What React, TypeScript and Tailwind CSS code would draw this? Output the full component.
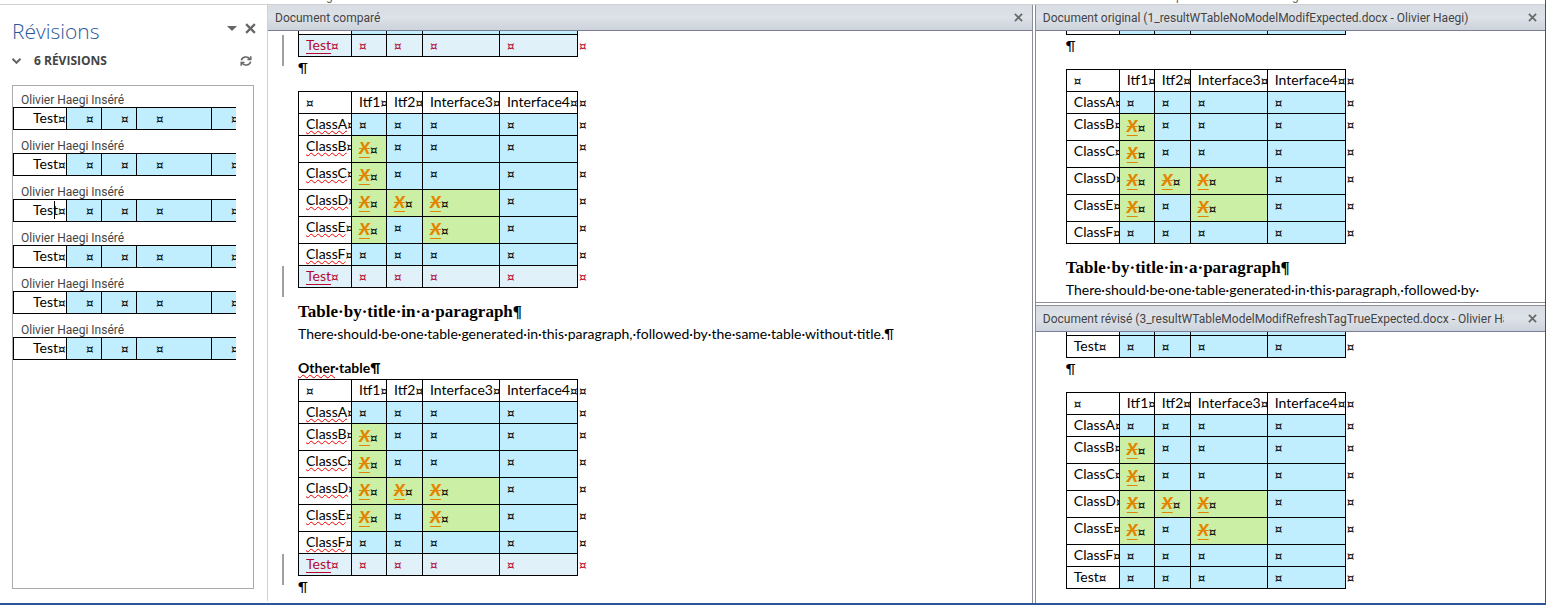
import { Fragment } from "react";

const HEADINGS = ["", "Itf1", "Itf2", "Interface3", "Interface4"];
const CLASS_ROWS = [
  { name: "ClassA", cells: ["", "", "", ""] },
  { name: "ClassB", cells: ["X", "", "", ""] },
  { name: "ClassC", cells: ["X", "", "", ""] },
  { name: "ClassD", cells: ["X", "X", "X", ""] },
  { name: "ClassE", cells: ["X", "", "X", ""] },
  { name: "ClassF", cells: ["", "", "", ""] },
];
const PARAGRAPH =
  "There should be one table generated in this paragraph, followed by the same table without title.¶";
const PARAGRAPH_FIRST_LINE = "There should be one table generated in this paragraph, followed by ";

type TestRow = "none" | "plain" | "inserted";

function Mark() {
  return <span className="font-['DejaVu_Sans',sans-serif] text-[12px] leading-none">¤</span>;
}

function Columns() {
  return (
    <colgroup>
      <col className="w-[54px]" />
      <col className="w-[35px]" />
      <col className="w-[36px]" />
      <col className="w-[77px]" />
      <col className="w-[78px]" />
      <col className="w-3" />
    </colgroup>
  );
}

const cellBase = "overflow-hidden border-r border-b border-black p-0 align-top font-normal text-left";
const tableBase = "w-[292px] table-fixed border-separate border-spacing-0 whitespace-nowrap text-[14px] leading-[19px]";

function RowEnd({ red = false }: { red?: boolean }) {
  return (
    <td className={red ? "p-0 pl-px align-top text-[#b5082e]" : "p-0 pl-px align-top"}>
      <Mark />
    </td>
  );
}

function TestRowView({ kind }: { kind: TestRow }) {
  if (kind === "none") return null;
  const red = kind === "inserted";
  const fill = red ? "bg-[#e1f1fa] text-[#b5082e]" : "bg-[#c1eeff]";
  return (
    <tr className="h-[22px]">
      <th scope="row" className={`${cellBase} border-l pl-[7px] ${red ? "bg-[#e1f1fa] text-[#b5082e]" : ""}`}>
        <span className={red ? "underline decoration-1 underline-offset-3" : ""}>Test</span>
        <Mark />
      </th>
      {[0, 1, 2, 3].map((i) => (
        <td key={i} className={`${cellBase} pl-[7px] ${fill}`}>
          <Mark />
        </td>
      ))}
      <RowEnd red={red} />
    </tr>
  );
}

function ChangeBar() {
  return <div className="absolute -bottom-[9px] -left-4 h-[31px] w-0.5 bg-[#a0a0a0]" />;
}

function TailTable({ kind }: { kind: TestRow }) {
  return (
    <div className="relative">
      <table className={tableBase}>
        <Columns />
        <tbody>
          <tr className="h-1">
            <td className={`${cellBase} border-l`} />
            {[0, 1, 2, 3].map((i) => (
              <td key={i} className={`${cellBase} bg-[#c1eeff]`} />
            ))}
            <td className="p-0" />
          </tr>
          <TestRowView kind={kind} />
        </tbody>
      </table>
      {kind === "inserted" && <ChangeBar />}
    </div>
  );
}

function ClassTable({ kind, spell = false }: { kind: TestRow; spell?: boolean }) {
  return (
    <div className="relative">
      <table className={tableBase}>
        <Columns />
        <thead>
          <tr className="h-[23px]">
            {HEADINGS.map((h, i) => (
              <th
                key={i}
                scope="col"
                className={`${cellBase} border-t pl-[7px] ${i === 0 ? "border-l" : ""}`}
              >
                {h}
                <Mark />
              </th>
            ))}
            <td className="p-0 pt-px pl-px align-top">
              <Mark />
            </td>
          </tr>
        </thead>
        <tbody>
          {CLASS_ROWS.map((row) => (
            <tr key={row.name} className={row.cells.includes("X") ? "h-[27px]" : "h-[22px]"}>
              <th scope="row" className={`${cellBase} border-l pl-[7px]`}>
                <span
                  className={
                    spell ? "underline decoration-[#f00000] decoration-wavy decoration-1 underline-offset-1" : ""
                  }
                >
                  {row.name}
                </span>
                <Mark />
              </th>
              {row.cells.map((c, i) =>
                c ? (
                  <td key={i} className={`${cellBase} bg-[#cbf0a5] pl-[7px] leading-[26px]`}>
                    <span className="text-[17px] leading-none font-black text-[#e38400] italic [text-decoration:underline_line-through_1px] [text-underline-offset:3px]">
                      {c}
                    </span>
                    <Mark />
                  </td>
                ) : (
                  <td key={i} className={`${cellBase} bg-[#c1eeff] pl-[7px]`}>
                    <Mark />
                  </td>
                ),
              )}
              <RowEnd />
            </tr>
          ))}
          <TestRowView kind={kind} />
        </tbody>
      </table>
      {kind === "inserted" && <ChangeBar />}
    </div>
  );
}

function Spaced({ text }: { text: string }) {
  const words = text.split(" ");
  return (
    <>
      {words.map((w, i) => (
        <Fragment key={i}>
          {w}
          {i < words.length - 1 && (
            <>
              ·<wbr />
            </>
          )}
        </Fragment>
      ))}
    </>
  );
}

function Pilcrow() {
  return <p className="mb-3">¶</p>;
}

function TitleParagraph({ text }: { text: string }) {
  return (
    <>
      <h2 className="mt-[13px] font-['Liberation_Serif',serif] text-[17px] font-bold">
        <Spaced text="Table by title in a paragraph¶" />
      </h2>
      <p>
        <Spaced text={text} />
      </p>
    </>
  );
}

function CloseIcon({ className }: { className: string }) {
  return (
    <svg viewBox="0 0 10 10" className={className} fill="none" stroke="currentColor" strokeWidth="2">
      <path d="M1 1l8 8M9 1L1 9" />
    </svg>
  );
}

function Pane({ title, children }: { title: string; children: React.ReactNode }) {
  return (
    <section className="flex min-h-0 min-w-0 flex-col">
      <header className="flex h-[26px] shrink-0 items-center border-b border-[#7c7c99] bg-linear-to-b from-[#d8dde4] via-[#dde1e8] to-[#cdd3db] pr-[5px] pl-[7px] text-[#444]">
        <h2 className="min-w-0 flex-1 overflow-hidden font-[Roboto,sans-serif] text-[12px] leading-5 whitespace-nowrap">
          {title}
        </h2>
        <button type="button" aria-label="Fermer" className="ml-5 flex size-4 items-center justify-center text-[#6a6a6a]">
          <CloseIcon className="size-[9px]" />
        </button>
      </header>
      <div className="min-h-0 flex-1 overflow-hidden bg-white pr-10 pl-[30px] font-[Lato,sans-serif] text-[14px] leading-[22px] text-black">
        {children}
      </div>
    </section>
  );
}

function Revision({ caret }: { caret: boolean }) {
  return (
    <li className="mb-2.5">
      <p className="pl-2 font-[Roboto,sans-serif] text-[12px] leading-[13px] text-[#444]">Olivier Haegi Inséré</p>
      <div className="relative">
        <table className="w-[223px] table-fixed border-separate border-spacing-0 font-[Lato,sans-serif] text-[14px] leading-[19px] whitespace-nowrap text-black">
          <colgroup>
            <col className="w-[54px]" />
            <col className="w-[35px]" />
            <col className="w-[35px]" />
            <col className="w-[75px]" />
            <col className="w-6" />
          </colgroup>
          <tbody>
            <tr className="h-[23px]">
              <td className="overflow-hidden border border-black p-0 pl-[19px] align-top">
                Test
                <Mark />
              </td>
              {[0, 1, 2].map((i) => (
                <td key={i} className="border-y border-r border-black bg-[#c1eeff] p-0 pl-[19px] align-top">
                  <Mark />
                </td>
              ))}
              <td className="overflow-hidden border-y border-black bg-[#c1eeff] p-0 pl-[19px] align-top">
                <Mark />
              </td>
            </tr>
          </tbody>
        </table>
        {caret && <div className="absolute top-0.5 left-[41px] h-[18px] w-px bg-black" />}
      </div>
    </li>
  );
}

function RevisionsPanel() {
  return (
    <aside className="mb-0.5 flex flex-col border-r border-[#d0d0d0] pr-[13px] pb-3 pl-3 font-['Open_Sans',sans-serif]">
      <div className="mt-2.5 flex h-8 items-center">
        <h1 className="flex-1 text-[21px] leading-7 font-light text-[#2b579a]">Révisions</h1>
        <button type="button" aria-label="Options" className="mb-1.5 flex h-4 w-3 items-center justify-center text-[#666]">
          <svg viewBox="0 0 10 5" className="h-[5px] w-[10px]" fill="currentColor">
            <path d="M0 0h10L5 5z" />
          </svg>
        </button>
        <button type="button" aria-label="Fermer" className="-mr-1 mb-1.5 ml-1 flex size-4 items-center justify-center text-[#666]">
          <CloseIcon className="size-[11px]" />
        </button>
      </div>
      <div className="mt-0.5 flex h-6 items-center">
        <button type="button" aria-label="Réduire" className="flex w-[22px] items-center text-[#666]">
          <svg viewBox="0 0 9 6" className="h-1.5 w-[9px]" fill="none" stroke="currentColor" strokeWidth="2">
            <path d="M.5 .8l4 4 4-4" />
          </svg>
        </button>
        <h2 className="flex-1 text-[12px] font-bold text-[#444]">6 RÉVISIONS</h2>
        <button type="button" aria-label="Actualiser" className="mr-0.5 text-[#666]">
          <svg viewBox="0 0 12 12" className="size-3" fill="none" stroke="currentColor" strokeWidth="1.5">
            <path d="M1.4 5.4A4.6 4 0 0 1 9.8 3.8M10.6 6.6A4.6 4 0 0 1 2.2 8.2" />
            <path d="M10.8 1.2v3.4H7.4M1.2 10.8V7.4H4.6" />
          </svg>
        </button>
      </div>
      <ul className="mt-3 flex-1 border border-[#ababab] pt-2">
        {[0, 1, 2, 3, 4, 5].map((i) => (
          <Revision key={i} caret={i === 2} />
        ))}
      </ul>
    </aside>
  );
}

export default function App() {
  return (
    <div className="flex h-screen flex-col overflow-hidden border-r border-b-2 border-r-[#2b579a] border-b-[#2b579a] bg-white">
      <div className="flex h-[5px] shrink-0 items-end overflow-hidden border-b border-[#d0d0d0] pb-0.5 pl-[326px] font-[Roboto,sans-serif] text-[12px] leading-none text-[#666]">
        <span className="w-[850px]">g</span>
        <span className="w-[116px]">p</span>
        <span>g</span>
      </div>
      <main className="grid min-h-0 flex-1 grid-cols-[268px_minmax(0,3fr)_4px_minmax(0,2fr)] grid-rows-[minmax(0,1fr)]">
        <RevisionsPanel />
        <Pane title="Document comparé">
          <TailTable kind="inserted" />
          <Pilcrow />
          <ClassTable kind="inserted" spell />
          <TitleParagraph text={PARAGRAPH} />
          <h3 className="mt-3 font-bold">
            <span className="underline decoration-[#f00000] decoration-wavy decoration-1 underline-offset-1">Other</span>
            ·table¶
          </h3>
          <ClassTable kind="inserted" spell />
          <p>¶</p>
        </Pane>
        <div className="border-x border-[#8c8c96]" />
        <div className="grid min-h-0 grid-rows-[minmax(0,1fr)_4px_minmax(0,1fr)]">
          <Pane title="Document original (1_resultWTableNoModelModifExpected.docx - Olivier Haegi)">
            <TailTable kind="none" />
            <Pilcrow />
            <ClassTable kind="none" />
            <TitleParagraph text={PARAGRAPH_FIRST_LINE} />
          </Pane>
          <div className="border-y border-[#8c8c96]" />
          <Pane title="Document révisé (3_resultWTableModelModifRefreshTagTrueExpected.docx - Olivier Haegi)">
            <TailTable kind="plain" />
            <Pilcrow />
            <ClassTable kind="plain" />
          </Pane>
        </div>
      </main>
    </div>
  );
}
